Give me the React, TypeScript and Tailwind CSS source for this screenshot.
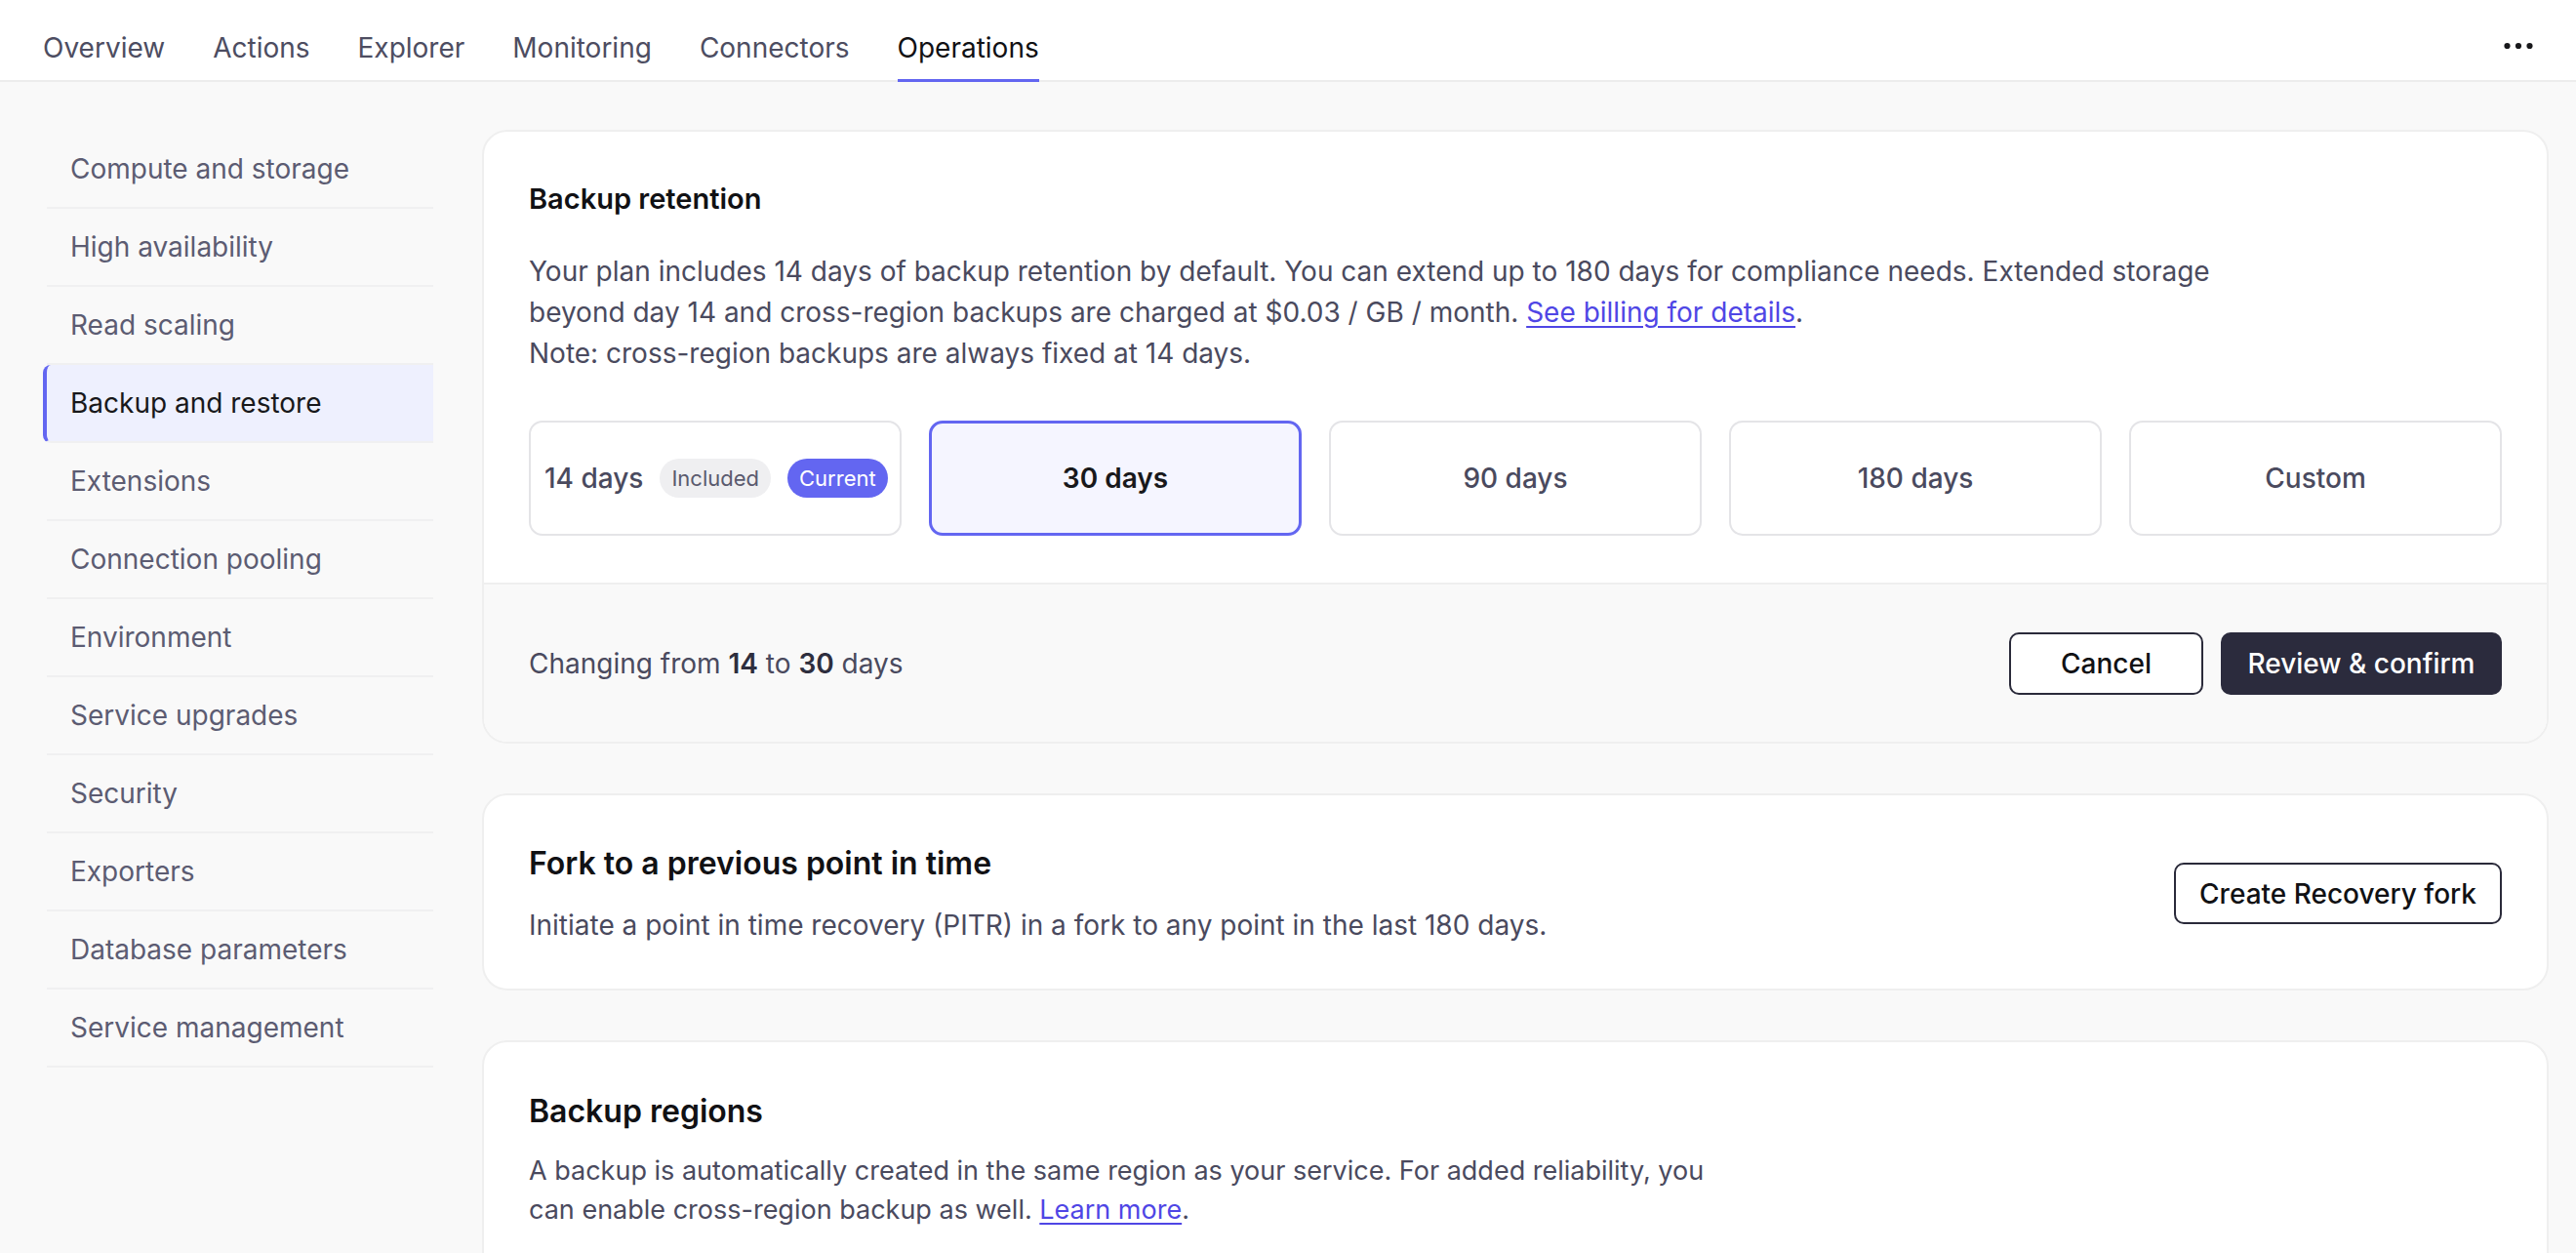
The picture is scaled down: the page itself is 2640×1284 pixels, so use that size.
import React from "react";

const tabs = ["Overview", "Actions", "Explorer", "Monitoring", "Connectors", "Operations"];
const activeTab = "Operations";

const sideItems = [
  "Compute and storage",
  "High availability",
  "Read scaling",
  "Backup and restore",
  "Extensions",
  "Connection pooling",
  "Environment",
  "Service upgrades",
  "Security",
  "Exporters",
  "Database parameters",
  "Service management",
];
const activeSide = "Backup and restore";

const options = ["14 days", "30 days", "90 days", "180 days", "Custom"];
const selectedOption = "30 days";

function MoreDots() {
  return (
    <svg width="30" height="8" viewBox="0 0 30 8" aria-hidden="true">
      <circle cx="3.5" cy="4" r="3.1" fill="#18181b" />
      <circle cx="15" cy="4" r="3.1" fill="#18181b" />
      <circle cx="26.5" cy="4" r="3.1" fill="#18181b" />
    </svg>
  );
}

function TopNav() {
  return (
    <header className="h-[84px] bg-white border-b-2 border-[#ededed] flex items-stretch justify-between pl-[44px] pr-[44px]">
      <nav className="flex items-stretch gap-[49px]">
        {tabs.map((t) => (
          <a
            key={t}
            className={
              "flex items-center pt-[17px] -mb-[2px] border-b-[3px] text-[28px] leading-[34px] " +
              (t === activeTab
                ? "border-[#6366f1] text-[#111114]"
                : "border-transparent text-[#4d4d61]")
            }
          >
            {t}
          </a>
        ))}
      </nav>
      <div className="flex items-center pt-[12px]">
        <MoreDots />
      </div>
    </header>
  );
}

function Sidebar() {
  return (
    <aside className="w-[396px] shrink-0 pt-[50px]">
      {sideItems.map((s) => {
        const active = s === activeSide;
        return (
          <div
            key={s}
            className={
              "h-[80px] flex items-center border-b-2 border-[#f0f0f1] text-[28px] " +
              (active
                ? "-ml-[4px] border-l-4 border-l-[#6366f1] rounded-l-[8px] bg-[#eef0fe] pl-[24px] text-[#18181b]"
                : "pl-[24px] text-[#5c5c72]")
            }
          >
            {s}
          </div>
        );
      })}
    </aside>
  );
}

function OptionCard({ label }: { label: string }) {
  const selected = label === selectedOption;
  if (label === "14 days") {
    return (
      <div className="h-[118px] rounded-[14px] border-2 border-[#e4e4e7] bg-white flex items-center pl-[14px] gap-[17px]">
        <span className="text-[28px] font-medium text-[#4a4a5e]">14 days</span>
        <span className="h-[40px] px-[12px] rounded-full bg-[#efeff1] text-[22px] text-[#5a5a6e] flex items-center">
          Included
        </span>
        <span className="h-[40px] px-[12px] rounded-full bg-[#6366f1] text-[22px] text-white flex items-center">
          Current
        </span>
      </div>
    );
  }
  return (
    <div
      className={
        "h-[118px] rounded-[14px] flex items-center justify-center text-[28px] " +
        (selected
          ? "border-[3px] border-[#6366f1] bg-[#f5f5ff] font-semibold text-[#18181b]"
          : "border-2 border-[#e4e4e7] bg-white font-medium text-[#4a4a5e]")
      }
    >
      {label}
    </div>
  );
}

function RetentionCard() {
  return (
    <section className="bg-white rounded-[26px] border-2 border-[#efefef]">
      <div className="px-[46px] pt-[48px] pb-[48px]">
        <h2 className="text-[29px] leading-[42px] font-semibold text-[#111114]">Backup retention</h2>
        <p className="mt-[32px] text-[28px] leading-[42px] text-[#4a4a5e]">
          Your plan includes 14 days of backup retention by default. You can extend up to 180 days for
          compliance needs. Extended storage
          <br />
          beyond day 14 and cross-region backups are charged at $0.03 / GB / month.{" "}
          <a className="text-[#4f46e5] underline underline-offset-[4px] decoration-2">See billing for details</a>.
          <br />
          Note: cross-region backups are always fixed at 14 days.
        </p>
        <div className="mt-[48px] grid grid-cols-5 gap-[28px]">
          {options.map((o) => (
            <OptionCard key={o} label={o} />
          ))}
        </div>
      </div>
      <div className="h-[163px] border-t-2 border-[#efefef] bg-[#f9f9f9] rounded-b-[24px] px-[46px] flex items-center justify-between">
        <p className="text-[28px] text-[#4a4a5e]">
          Changing from <span className="font-semibold text-[#2e2e3e]">14</span> to{" "}
          <span className="font-semibold text-[#2e2e3e]">30</span> days
        </p>
        <div className="flex gap-[18px]">
          <button className="w-[199px] h-[64px] rounded-[10px] border-2 border-[#2a2a3a] bg-white text-[28px] font-medium text-[#111114]">
            Cancel
          </button>
          <button className="w-[288px] h-[64px] rounded-[10px] bg-[#2b2b3d] text-[28px] font-medium text-white">
            Review &amp; confirm
          </button>
        </div>
      </div>
    </section>
  );
}

function ForkCard() {
  return (
    <section className="bg-white rounded-[26px] border-2 border-[#efefef] px-[46px] pt-[47px] pb-[44px] flex items-center justify-between">
      <div>
        <h2 className="text-[32px] leading-[46px] font-semibold text-[#111114]">
          Fork to a previous point in time
        </h2>
        <p className="mt-[19px] text-[28px] leading-[42px] text-[#4a4a5e]">
          Initiate a point in time recovery (PITR) in a fork to any point in the last 180 days.
        </p>
      </div>
      <button className="h-[63px] px-[24px] rounded-[10px] border-2 border-[#2a2a3a] bg-white text-[28px] font-medium text-[#111114]">
        Create Recovery fork
      </button>
    </section>
  );
}

function RegionsCard() {
  return (
    <section className="bg-white rounded-[26px] border-2 border-[#efefef] px-[46px] pt-[48px] pb-[48px]">
      <h2 className="text-[32px] leading-[46px] font-semibold text-[#111114]">Backup regions</h2>
      <p className="mt-[18px] text-[27px] leading-[40px] text-[#4a4a5e]">
        A backup is automatically created in the same region as your service. For added reliability, you
        <br />
        can enable cross-region backup as well.{" "}
        <a className="text-[#4f46e5] underline underline-offset-[4px] decoration-2">Learn more</a>.
      </p>
    </section>
  );
}

export default function App() {
  return (
    <div className="min-h-screen bg-[#f9f9f9] font-['Inter',sans-serif] antialiased">
      <TopNav />
      <div className="flex pl-[48px] pr-[28px] gap-[50px]">
        <Sidebar />
        <main className="flex-1 pt-[49px] flex flex-col gap-[51px]">
          <RetentionCard />
          <ForkCard />
          <RegionsCard />
        </main>
      </div>
    </div>
  );
}
